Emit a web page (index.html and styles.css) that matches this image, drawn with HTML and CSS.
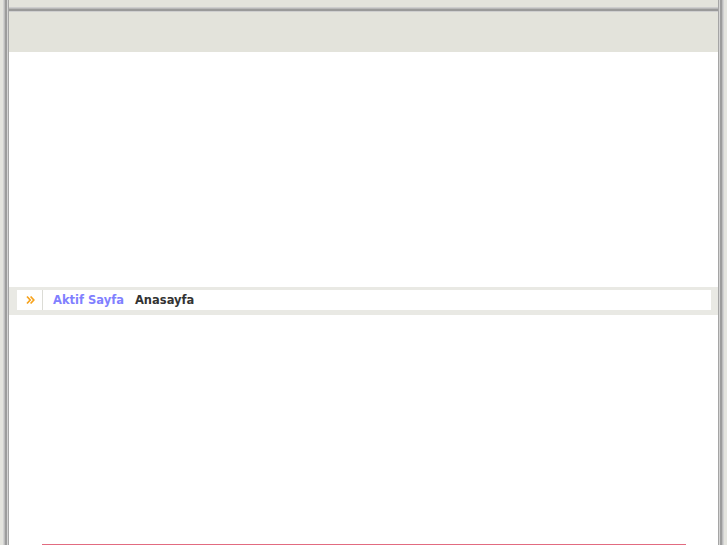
FILE: index.html
```html
<!DOCTYPE html>
<html lang="tr">
<head>
<meta charset="utf-8">
<title>Anasayfa</title>
<link rel="stylesheet" href="styles.css">
</head>
<body>
<div class="frame">
  <div class="inner">
    <div class="top-strip"></div>
    <div class="top-rule"></div>
    <div class="header"></div>
    <div class="banner"></div>
    <div class="crumb-band">
      <div class="crumb">
        <span class="crumb-icon">
          <svg width="10" height="10" viewBox="0 0 10 10">
            <path d="M1 1.5 L4.2 5 L1 8.5 M4.6 1.5 L7.8 5 L4.6 8.5" fill="none" stroke="#f7a21b" stroke-width="1.7"/>
          </svg>
        </span>
        <span class="crumb-label">Aktif Sayfa</span>
        <span class="crumb-page">Anasayfa</span>
      </div>
    </div>
    <div class="content"></div>
    <div class="footer-rule"></div>
  </div>
</div>
</body>
</html>
```
FILE: styles.css
```css
html, body {
  margin: 0;
  padding: 0;
  height: 100%;
  overflow: hidden;
}
body {
  background: #e4e4de;
  font-family: "DejaVu Sans", Verdana, sans-serif;
}
.frame {
  margin-left: 3px;
  width: 721px;
  height: 545px;
  box-sizing: border-box;
  padding: 0 6px;
  background:
    linear-gradient(to right, #d2d2d2 0 1px, #bdbdbd 1px 2px, #9c9c9c 2px 4px, #d4d4d4 4px 5px, #a5a5a5 5px 6px, transparent 6px) left top / 6px 100% no-repeat,
    linear-gradient(to right, #a5a5a5 0 1px, #d4d4d4 1px 2px, #9c9c9c 2px 4px, #bdbdbd 4px 5px, #d2d2d2 5px 6px) right top / 6px 100% no-repeat,
    #ffffff;
}
.inner {
  height: 100%;
  display: flex;
  flex-direction: column;
  background: #ffffff;
}
.top-strip {
  height: 7px;
  background: #e3e3dc;
}
.top-rule {
  height: 5px;
  background: linear-gradient(#cdcdcd 0 1px, #b8b8b8 1px 2px, #9a9a9a 2px 4px, #cfcfcf 4px 5px);
}
.header {
  height: 40px;
  background: #e3e3db;
}
.banner {
  height: 235px;
  background: #ffffff;
}
.crumb-band {
  height: 28px;
  background: #e9e9e4;
  padding: 3px 7px 5px 8px;
  box-sizing: border-box;
  display: flex;
}
.crumb {
  flex: 1;
  background: #ffffff;
  display: flex;
  align-items: center;
}
.crumb-icon {
  width: 26px;
  height: 100%;
  border-right: 1px solid #dcdcd6;
  display: flex;
  align-items: center;
  justify-content: center;
  padding-left: 2px;
  box-sizing: border-box;
}
.crumb-label {
  margin-left: 10px;
  font-size: 11.5px;
  font-weight: bold;
  color: #8080ff;
}
.crumb-page {
  margin-left: 11px;
  font-size: 11.5px;
  font-weight: bold;
  color: #333333;
}
.content {
  flex: 1;
  background: #ffffff;
}
.footer-rule {
  height: 1px;
  margin: 0 32px 0 33px;
  background: #e26b80;
}
```
